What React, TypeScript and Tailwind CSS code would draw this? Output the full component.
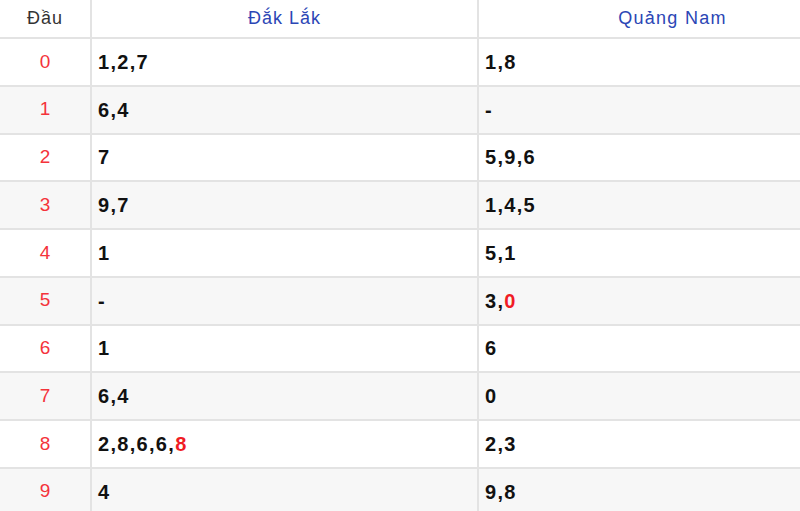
import React from "react";

type Part = { t: string; red?: boolean };
const rows: { d: string; a: Part[]; b: Part[] }[] = [
  { d: "0", a: [{ t: "1,2,7" }], b: [{ t: "1,8" }] },
  { d: "1", a: [{ t: "6,4" }], b: [{ t: "-" }] },
  { d: "2", a: [{ t: "7" }], b: [{ t: "5,9,6" }] },
  { d: "3", a: [{ t: "9,7" }], b: [{ t: "1,4,5" }] },
  { d: "4", a: [{ t: "1" }], b: [{ t: "5,1" }] },
  { d: "5", a: [{ t: "-" }], b: [{ t: "3," }, { t: "0", red: true }] },
  { d: "6", a: [{ t: "1" }], b: [{ t: "6" }] },
  { d: "7", a: [{ t: "6,4" }], b: [{ t: "0" }] },
  { d: "8", a: [{ t: "2,8,6,6," }, { t: "8", red: true }], b: [{ t: "2,3" }] },
  { d: "9", a: [{ t: "4" }], b: [{ t: "9,8" }] },
];

function Val({ parts }: { parts: Part[] }) {
  return (
    <div className="flex items-center pl-[6px] text-[20px] font-bold tracking-[1.3px] text-[#111]">
      {parts.map((p, i) => (
        <span key={i} className={p.red ? "text-[#f01c24]" : ""}>
          {p.t}
        </span>
      ))}
    </div>
  );
}

export default function App() {
  return (
    <div className="w-[800px] h-[511px] overflow-hidden bg-white">
      <div
        className="w-[866px]"
        style={{ fontFamily: '"Liberation Sans", Arial, sans-serif' }}
      >
        <div className="grid grid-cols-[92px_387px_1fr] h-[39px] border-b-2 border-[#e3e3e3] bg-white">
          <div className="flex items-center justify-center border-r-2 border-[#e3e3e3] text-[18px] tracking-[1px] text-[#333]">
            Đầu
          </div>
          <div className="flex items-center justify-center border-r-2 border-[#e3e3e3] text-[18px] tracking-[1px] text-[#2b46b5]">
            Đắk Lắk
          </div>
          <div className="flex items-center justify-center text-[18px] tracking-[1.3px] text-[#2b46b5]">
            Quảng Nam
          </div>
        </div>
        {rows.map((r, i) => (
          <div
            key={r.d}
            className={
              "grid grid-cols-[92px_387px_1fr] h-[47.75px] border-b-2 border-[#e3e3e3] " +
              (i % 2 === 1 ? "bg-[#f7f7f7]" : "bg-white")
            }
          >
            <div className="flex items-center justify-center border-r-2 border-[#e3e3e3] text-[19px] text-[#f4333b]">
              {r.d}
            </div>
            <div className="flex border-r-2 border-[#e3e3e3]">
              <Val parts={r.a} />
            </div>
            <div className="flex">
              <Val parts={r.b} />
            </div>
          </div>
        ))}
      </div>
    </div>
  );
}
